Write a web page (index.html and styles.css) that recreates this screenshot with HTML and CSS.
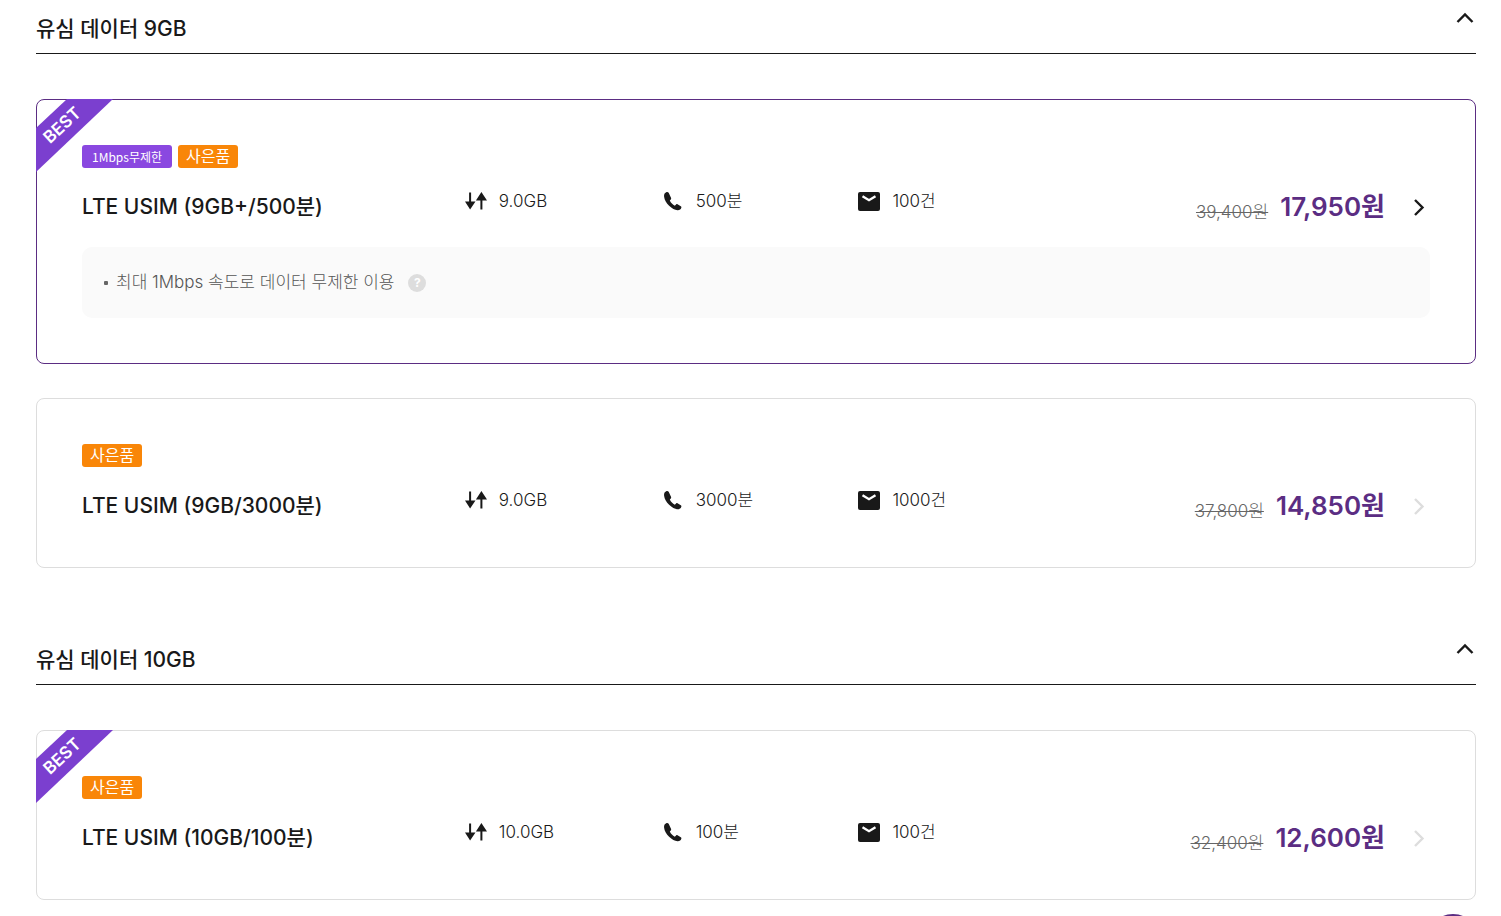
FILE: index.html
```html
<!DOCTYPE html>
<html lang="ko">
<head>
  <meta charset="UTF-8">
  <meta name="viewport" content="width=device-width, initial-scale=1.0">
  <title>유심 요금제</title>
  <link rel="stylesheet" href="styles.css">
</head>
<body>
  <!-- shared icons -->
  <svg class="icon-defs" aria-hidden="true">
    <symbol id="icon-up" viewBox="0 0 20 14">
      <path d="M2.500 11 L10 3.500 L17.500 11" fill="none" stroke="currentColor" stroke-width="2.4"/>
    </symbol>
    <symbol id="icon-next" viewBox="0 0 12 18">
      <path d="M2 2 L9.500 9.500 L2 17" fill="none" stroke="currentColor" stroke-width="2.4"/>
    </symbol>
    <symbol id="icon-data" viewBox="0 0 22 20">
      <path d="M4.100 1.500h2v9h4.400L5.100 18.500 0 10.500h4.100z"/>
      <path d="M15.400 18.500h2V9.500h4.600L16.400 1 10.900 9.500h4.500z"/>
    </symbol>
    <symbol id="icon-call" viewBox="0 0 20 20">
      <path d="M3.2 1.2C1.6 1.8.8 3.4 1.1 5.8c.4 3.2 2.300 6.300 5 9 2.900 2.700 5.600 4.300 8.400 4.500 2 .1 3.500-.9 3.900-2.800.1-.6-.1-1-.6-1.300l-3.300-2c-.5-.3-1-.2-1.400.2l-1.300 1.300c-2.100-1-3.900-2.800-5-5.100l1-1.200c.4-.4.5-.9.3-1.400L5.800 2.100C5.400 1.200 4.300.8 3.200 1.200z"/>
    </symbol>
    <symbol id="icon-mail" viewBox="0 0 22 20">
      <rect width="22" height="19" y="1" rx="2"/>
      <path d="M4.500 5.300 L11 9.200 L17.500 5.300" fill="none" stroke="#fff" stroke-width="2.400"/>
    </symbol>
    <symbol id="icon-ribbon" viewBox="0 0 77 73">
      <path d="M31 0H77L0 73V29z" fill="#7b3fcf"/>
    </symbol>
  </svg>

  <main class="plans">
    <section class="plan-group">
      <header class="group-header">
        <h2>유심 데이터 9GB</h2>
        <button type="button" class="toggle" aria-label="접기"><svg><use href="#icon-up"/></svg></button>
      </header>

      <article class="plan active">
        <div class="ribbon"><svg><use href="#icon-ribbon"/></svg><span>BEST</span></div>
        <div class="tags">
          <span class="tag speed">1Mbps무제한</span>
          <span class="tag gift">사은품</span>
        </div>
        <div class="plan-row">
          <h3>LTE USIM (9GB+/500분)</h3>
          <p class="spec"><svg><use href="#icon-data"/></svg>9.0GB</p>
          <p class="spec"><svg><use href="#icon-call"/></svg>500분</p>
          <p class="spec"><svg><use href="#icon-mail"/></svg>100건</p>
          <div class="price">
            <del>39,400원</del>
            <strong>17,950원</strong>
            <a href="#" class="next" aria-label="상세 보기"><svg><use href="#icon-next"/></svg></a>
          </div>
        </div>
        <div class="note">
          <p>최대 1Mbps 속도로 데이터 무제한 이용</p>
          <button type="button" class="help" aria-label="도움말">?</button>
        </div>
      </article>

      <article class="plan">
        <div class="tags">
          <span class="tag gift">사은품</span>
        </div>
        <div class="plan-row">
          <h3>LTE USIM (9GB/3000분)</h3>
          <p class="spec"><svg><use href="#icon-data"/></svg>9.0GB</p>
          <p class="spec"><svg><use href="#icon-call"/></svg>3000분</p>
          <p class="spec"><svg><use href="#icon-mail"/></svg>1000건</p>
          <div class="price">
            <del>37,800원</del>
            <strong>14,850원</strong>
            <a href="#" class="next" aria-label="상세 보기"><svg><use href="#icon-next"/></svg></a>
          </div>
        </div>
      </article>
    </section>

    <section class="plan-group">
      <header class="group-header">
        <h2>유심 데이터 10GB</h2>
        <button type="button" class="toggle" aria-label="접기"><svg><use href="#icon-up"/></svg></button>
      </header>

      <article class="plan">
        <div class="ribbon"><svg><use href="#icon-ribbon"/></svg><span>BEST</span></div>
        <div class="tags">
          <span class="tag gift">사은품</span>
        </div>
        <div class="plan-row">
          <h3>LTE USIM (10GB/100분)</h3>
          <p class="spec"><svg><use href="#icon-data"/></svg>10.0GB</p>
          <p class="spec"><svg><use href="#icon-call"/></svg>100분</p>
          <p class="spec"><svg><use href="#icon-mail"/></svg>100건</p>
          <div class="price">
            <del>32,400원</del>
            <strong>12,600원</strong>
            <a href="#" class="next" aria-label="상세 보기"><svg><use href="#icon-next"/></svg></a>
          </div>
        </div>
      </article>
    </section>
  </main>

  <button type="button" class="floating" aria-label="맨 위로"></button>
</body>
</html>
```
FILE: styles.css
```css
* {
  box-sizing: border-box;
}

body {
  margin: 0;
  background: #fff;
  color: #191919;
  font-family: Inter, "Noto Sans CJK KR", sans-serif;
}

h2, h3, p {
  margin: 0;
}

button {
  padding: 0;
  border: none;
  background: none;
  color: inherit;
  font-family: inherit;
  cursor: pointer;
}

.icon-defs {
  display: none;
}

.plans {
  display: flex;
  flex-direction: column;
  gap: 63px;
  padding: 0 25px 0 36px;
}

.group-header {
  display: flex;
  justify-content: space-between;
  align-items: flex-start;
  margin-bottom: 45px;
  padding: 11px 0 6px;
  border-bottom: 1px solid #191919;
}

.group-header h2 {
  font-size: 21px;
  font-weight: 500;
  line-height: 36px;
}

.toggle {
  margin-right: 1px;
}

.toggle svg {
  display: block;
  width: 20px;
  height: 14px;
}

.plan {
  position: relative;
  padding: 45px 45px 44px;
  border: 1px solid #ddd;
  border-radius: 8px;
}

.plan + .plan {
  margin-top: 34px;
}

.plan.active {
  padding-bottom: 45px;
  border-color: #5b2d83;
}

.ribbon {
  position: absolute;
  top: -1px;
  left: -1px;
  width: 77px;
  height: 73px;
}

.ribbon svg {
  display: block;
  width: 77px;
  height: 73px;
}

.ribbon span {
  position: absolute;
  top: 16px;
  left: 1px;
  width: 50px;
  color: #fff;
  font-size: 17px;
  font-weight: 600;
  line-height: 20px;
  text-align: center;
  transform: rotate(-43deg);
}

.tags {
  display: flex;
  gap: 6px;
  margin-bottom: 22px;
}

.tag {
  padding: 0 8px;
  border-radius: 3px;
  color: #fff;
  font-size: 16px;
  font-weight: 400;
  line-height: 23px;
}

.tag.speed {
  padding: 0 10px;
  background: #8a48e0;
  font-family: "Noto Sans CJK KR", sans-serif;
  font-size: 12px;
}

.tag.gift {
  background: #f98608;
}

.plan-row {
  display: grid;
  grid-template-columns: 28.4% 14.6% 14.6% 14.6% 1fr;
}

.plan-row h3 {
  font-size: 21px;
  font-weight: 500;
  line-height: 34px;
  white-space: nowrap;
}

.spec {
  display: flex;
  align-items: center;
  gap: 12px;
  height: 22px;
  font-size: 17px;
  font-weight: 300;
  line-height: 22px;
  white-space: nowrap;
}

.spec svg {
  width: 22px;
  height: 20px;
  fill: currentColor;
}

.price {
  display: flex;
  justify-content: flex-end;
  align-items: flex-end;
  color: #5b2d83;
  white-space: nowrap;
}

.price del {
  margin-right: 12px;
  color: #666;
  font-size: 17px;
  font-weight: 300;
  line-height: 24px;
}

.price strong {
  font-size: 26px;
  font-weight: 600;
  line-height: 34px;
}

.next {
  align-self: center;
  margin: 0 5px 0 28px;
  color: #ddd;
}

.next svg {
  display: block;
  width: 12px;
  height: 18px;
}

.active .next {
  color: #191919;
}

.note {
  display: flex;
  align-items: center;
  gap: 14px;
  margin-top: 23px;
  padding: 22px;
  border-radius: 10px;
  background: #fafafa;
}

.note p {
  display: flex;
  align-items: center;
  gap: 8px;
  color: #555;
  font-size: 17px;
  font-weight: 300;
  line-height: 27px;
}

.note p::before {
  content: "";
  width: 4px;
  height: 4px;
  border-radius: 1px;
  background: #666;
}

.help {
  width: 18px;
  height: 18px;
  border-radius: 50%;
  background: #ddd;
  color: #fff;
  font-size: 12px;
  font-weight: 700;
  line-height: 18px;
}

.floating {
  position: fixed;
  right: 20px;
  bottom: -54px;
  width: 56px;
  height: 56px;
  border-radius: 50%;
  background: #5b2d83;
}
```
